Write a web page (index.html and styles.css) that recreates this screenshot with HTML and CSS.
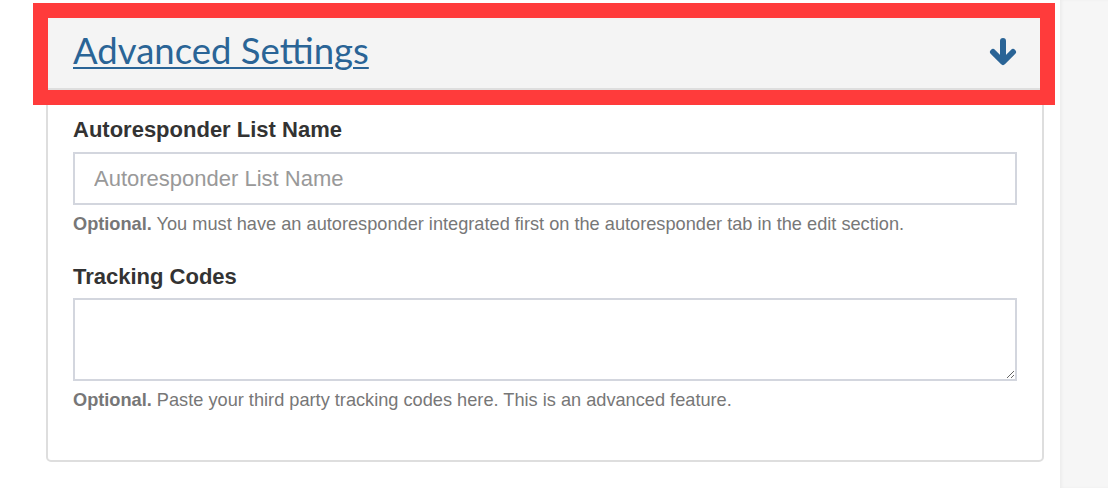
FILE: index.html
```html
<!DOCTYPE html>
<html lang="en">
<head>
    <meta charset="UTF-8">
    <meta name="viewport" content="width=device-width, initial-scale=1.0">
    <title>Advanced Settings</title>
    <link rel="stylesheet" href="styles.css">
</head>
<body>
    <div class="page">
        <main class="main">
            <div class="panel">
                <div class="panel-heading">
                    <a href="#" class="panel-title">Advanced Settings</a>
                    <svg class="arrow" width="28" height="28" viewBox="0 0 28 28">
                        <path d="M14 3 V23 M4 14 L14 24 L24 14" fill="none" stroke="#2a6496" stroke-width="6" stroke-linecap="round" stroke-linejoin="round"/>
                    </svg>
                </div>
                <div class="panel-body">
                    <div class="form-group">
                        <label for="list-name">Autoresponder List Name</label>
                        <input type="text" id="list-name" placeholder="Autoresponder List Name">
                        <p class="help"><strong>Optional.</strong> You must have an autoresponder integrated first on the autoresponder tab in the edit section.</p>
                    </div>
                    <div class="form-group">
                        <label for="tracking">Tracking Codes</label>
                        <textarea id="tracking"></textarea>
                        <p class="help"><strong>Optional.</strong> Paste your third party tracking codes here. This is an advanced feature.</p>
                    </div>
                </div>
            </div>
            <!-- caja roja de resaltado -->
            <div class="highlight"></div>
        </main>
        <aside class="sidebar"></aside>
    </div>
</body>
</html>
```

FILE: styles.css
```css
body {
    margin: 0;
    padding: 0;
    font-family: "Liberation Sans", Arial, sans-serif;
    background-color: #fff;
    color: #333;
}
.page {
    display: flex;
    height: 488px;
    overflow: hidden;
}
.main {
    position: relative;
    width: 1060px;
    padding: 16px 16px 0 46px;
    box-sizing: border-box;
}
.sidebar {
    flex: 1;
    background-color: #f6f6f6;
    box-shadow: inset 2px 0 3px rgba(0, 0, 0, 0.04);
}
.panel {
    width: 998px;
    border: 2px solid #dedede;
    border-radius: 5px;
    box-sizing: border-box;
    background: #fff;
}
.panel-heading {
    display: flex;
    align-items: center;
    justify-content: space-between;
    height: 70px;
    padding: 0 25px 0 25px;
    background-color: #f4f4f4;
    border-bottom: 2px solid #dedede;
}
.panel-title {
    font-family: Lato, "Open Sans", sans-serif;
    font-size: 36.5px;
    line-height: 1.2;
    color: #2a6496;
    text-decoration: underline;
    text-decoration-thickness: 2px;
    text-underline-offset: 3px;
    margin-bottom: 5px;
}
.arrow {
    display: block;
    margin-bottom: 3px;
}
.panel-body {
    padding: 27px 25px 49px 25px;
}
.form-group label {
    display: block;
    font-size: 22px;
    line-height: 25px;
    font-weight: bold;
    color: #333;
    margin-bottom: 10px;
}
.form-group + .form-group label {
    margin-bottom: 9px;
}
input, textarea {
    display: block;
    width: 100%;
    box-sizing: border-box;
    border: 2px solid #d3d6de;
    border-radius: 0;
    margin: 0;
    font-family: "Liberation Sans", Arial, sans-serif;
    font-size: 22px;
    color: #555;
    background: #fff;
}
input {
    height: 53px;
    padding: 0 19px;
}
input::placeholder {
    color: #999;
}
textarea {
    height: 83px;
    padding: 8px 19px;
}
.help {
    margin: 9px 0 0 0;
    font-size: 18.2px;
    line-height: 21px;
    color: #777;
}
.form-group + .form-group {
    margin-top: 29px;
}
.highlight {
    position: absolute;
    left: 33px;
    top: 3px;
    width: 1022px;
    height: 102px;
    box-sizing: border-box;
    border: 15px solid #ff3b3b;
    pointer-events: none;
}
```
